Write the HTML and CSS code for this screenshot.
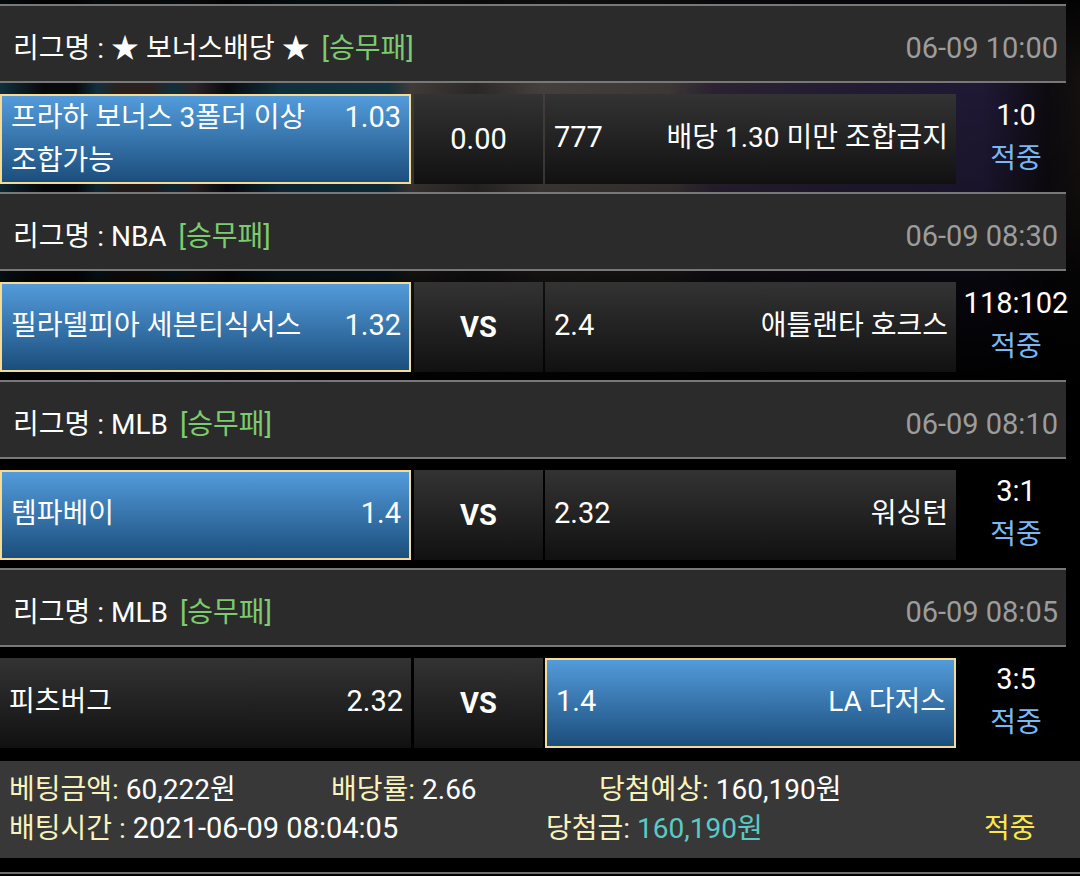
FILE: index.html
```
<!DOCTYPE html>
<html lang="ko">
<head>
	<meta charset="utf-8">
	<title>베팅내역</title>
	<link rel="stylesheet" href="styles.css">
</head>
<body>

<div class="slip">
	<section class="game">
		<div class="league">
			<span class="name">리그명 : ★ 보너스배당 ★ <em>[승무패]</em></span>
			<span class="date">06-09 10:00</span>
		</div>
		<div class="match">
			<div class="pick on long"><span class="team">프라하 보너스 3폴더 이상 조합가능</span><span class="odds">1.03</span></div>
			<div class="draw">0.00</div>
			<div class="pick"><span class="odds">777</span><span class="team">배당 1.30 미만 조합금지</span></div>
			<div class="result"><span class="score">1:0</span><span class="hit">적중</span></div>
		</div>
	</section>

	<section class="game">
		<div class="league">
			<span class="name">리그명 : NBA <em>[승무패]</em></span>
			<span class="date">06-09 08:30</span>
		</div>
		<div class="match">
			<div class="pick on"><span class="team">필라델피아 세븐티식서스</span><span class="odds">1.32</span></div>
			<div class="draw"><b>VS</b></div>
			<div class="pick"><span class="odds">2.4</span><span class="team">애틀랜타 호크스</span></div>
			<div class="result"><span class="score">118:102</span><span class="hit">적중</span></div>
		</div>
	</section>

	<section class="game">
		<div class="league">
			<span class="name">리그명 : MLB <em>[승무패]</em></span>
			<span class="date">06-09 08:10</span>
		</div>
		<div class="match">
			<div class="pick on"><span class="team">템파베이</span><span class="odds">1.4</span></div>
			<div class="draw"><b>VS</b></div>
			<div class="pick"><span class="odds">2.32</span><span class="team">워싱턴</span></div>
			<div class="result"><span class="score">3:1</span><span class="hit">적중</span></div>
		</div>
	</section>

	<section class="game">
		<div class="league">
			<span class="name">리그명 : MLB <em>[승무패]</em></span>
			<span class="date">06-09 08:05</span>
		</div>
		<div class="match">
			<div class="pick"><span class="team">피츠버그</span><span class="odds">2.32</span></div>
			<div class="draw"><b>VS</b></div>
			<div class="pick on"><span class="odds">1.4</span><span class="team">LA 다저스</span></div>
			<div class="result"><span class="score">3:5</span><span class="hit">적중</span></div>
		</div>
	</section>

	<!-- 베팅 합계 -->
	<div class="total">
		<div class="line money">
			<div><span class="tit">베팅금액:</span> 60,222원</div>
			<div><span class="tit">배당률:</span> 2.66</div>
			<div><span class="tit">당첨예상:</span> 160,190원</div>
		</div>
		<div class="line paid">
			<div><span class="tit">배팅시간 :</span> <span class="time">2021-06-09 08:04:05</span></div>
			<div><span class="tit">당첨금:</span> <span class="win">160,190원</span></div>
			<div class="state">적중</div>
		</div>
	</div>
</div>

</body>
</html>
```
FILE: styles.css
```
*{
	box-sizing: border-box;
}

body{
	margin: 0;
	font-family: Roboto, "Noto Sans CJK KR", sans-serif;
	font-size: 28px;
	line-height: 43px;
	color: #fff;
	/* 어두운 배경, 아래로 갈수록 검정 */
	background-color: #000;
	background-image:
		linear-gradient(rgba(0,0,0,.8), transparent 80px, rgba(0,0,0,.2) 190px, rgba(0,0,0,.75) 280px, #000 390px),
		linear-gradient(to right, #10303d, #08090d 4%, #08090d 7%, #10303d 9%, #2b211f 11%, #2b211f 14%, #10303d 16%, #2b2429 18%, #0a0a10 21%, #10303d 26%, #123340 36%, #413c39 38%, #2c2828 44%, #45403d 50%, #3d3735 62%, #2c2233 66%, #221b33 80%, #1f1935 91%, #0d0b10 97%, #14100f);
	background-repeat: no-repeat;
}

.slip{
	padding-top: 4px;
	border-bottom: 2px solid #6e6e6e;
	padding-bottom: 14px;
}

.game{
	margin-bottom: 8px;
}

.league{
	display: flex;
	justify-content: space-between;
	height: 79px;
	margin-right: 14px;
	padding: 21px 8px 0 13px;
	background: #2b2b2b;
	border-top: 2px solid #787878;
	border-bottom: 2px solid #787878;
}
.league em{
	margin-left: 5px;
	font-style: normal;
	color: #7ccb6f;
}
.date{
	color: #9c9c9c;
}

.match{
	display: grid;
	grid-template-columns: 411fr 134fr 411fr 120fr;
	margin: 11px 4px 0 0;
	min-height: 90px;
}

.pick, .draw{
	display: flex;
	background: linear-gradient(#333, #111);
}
.pick{
	align-items: flex-start;
	justify-content: space-between;
	padding: 22px 8px 0 9px;
}
.pick.on{
	padding-top: 20px;
	background: linear-gradient(#539bdb, #1b4e7c);
	border: 2px solid #f6dc92;
}
.pick.long{
	padding-top: 0;
}
.draw{
	align-items: center;
	justify-content: center;
	margin: 0 2px 0 3px;
}
.team{
	word-break: keep-all;
}
.odds, .score, .draw, .date, .time{
	font-size: 29px;
}

.result{
	display: flex;
	flex-direction: column;
	align-items: center;
}
.hit{
	color: #79b8f5;
}

/* 합계 */
.total{
	margin-top: 13px;
	padding: 9px 10px 10px 9px;
	line-height: 39px;
	background: #383838;
}
.line{
	display: grid;
}
.money{
	grid-template-columns: 322fr 268fr 471fr;
}
.paid{
	grid-template-columns: 537fr 438fr 86fr;
}
.tit{
	color: #f8f3bd;
}
.win{
	color: #5ccac4;
}
.state{
	color: #fae84b;
}
```
